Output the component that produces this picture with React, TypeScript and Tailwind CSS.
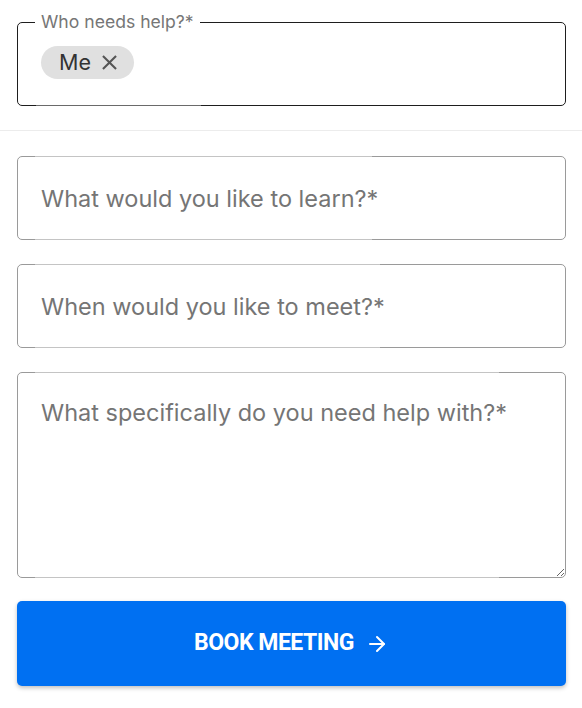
import React from "react";
import { ArrowRight } from "lucide-react";
import { MdClose } from "react-icons/md";

const font = { fontFamily: "Inter, 'Noto Sans', sans-serif" };

function Field({ placeholder, seg }: { placeholder: string; seg: number }) {
  return (
    <div className="relative h-[84px]">
      <input
        placeholder={placeholder}
        className="w-full h-full rounded-[5px] border border-[#9a9a9a] bg-white px-[23px] text-[23.5px] text-[#333] placeholder:text-[#757575] outline-none"
        style={font}
      />
      <div className="absolute left-[18px] top-0 h-px bg-[#c4c4c4]" style={{ width: seg }} />
      <div className="absolute left-[18px] bottom-0 h-px bg-[#c4c4c4]" style={{ width: seg }} />
    </div>
  );
}

export default function App() {
  return (
    <div className="w-[582px] h-[708px] bg-white" style={font}>
      <div className="pl-[17px] pr-[16px] pt-[22px] pb-[24px]">
        <div className="relative h-[84px] rounded-[5px] border border-[#1e1e1e]">
          <div className="absolute left-[17px] top-[-12px] bg-white px-[6px] text-[17.6px] leading-[22px] text-[#767676]">
            Who needs help?*
          </div>
          <div className="absolute left-[18px] bottom-[-1px] w-[165px] h-px bg-[#6a6a6a]" />
          <div className="pl-[23px] pt-[23px]">
            <div className="inline-flex h-[33px] items-center gap-[6px] rounded-full bg-[#e0e0e0] pl-[18px] pr-[12px]">
              <span className="text-[21.5px] leading-none text-[#333]">Me</span>
              <MdClose size={25} color="#555" />
            </div>
          </div>
        </div>
      </div>
      <div className="h-px w-full bg-[#ececec]" />
      <div className="pl-[17px] pr-[16px] pt-[25px] flex flex-col gap-[24px]">
        <Field placeholder="What would you like to learn?*" seg={337} />
        <Field placeholder="When would you like to meet?*" seg={345} />
        <div className="relative h-[206px]">
          <textarea
            placeholder="What specifically do you need help with?*"
            className="block w-full h-full rounded-[5px] border border-[#9a9a9a] bg-white px-[23px] pt-[23px] text-[23.5px] leading-[34px] text-[#333] placeholder:text-[#757575] outline-none resize"
            style={font}
          />
          <div className="absolute left-[18px] top-0 w-[464px] h-px bg-[#c4c4c4]" />
          <div className="absolute left-[18px] bottom-0 w-[464px] h-px bg-[#c4c4c4]" />
        </div>
        <button className="h-[85px] -mt-px w-full rounded-[5px] bg-[#0070f2] text-white shadow-[0_2px_4px_rgba(0,0,0,0.25)] flex items-center justify-center gap-[11px]">
          <span className="text-[23px] font-bold tracking-[-0.5px]" style={{ fontFamily: "Roboto, Inter, sans-serif" }}>
            BOOK MEETING
          </span>
          <ArrowRight size={24} strokeWidth={2} />
        </button>
      </div>
    </div>
  );
}
